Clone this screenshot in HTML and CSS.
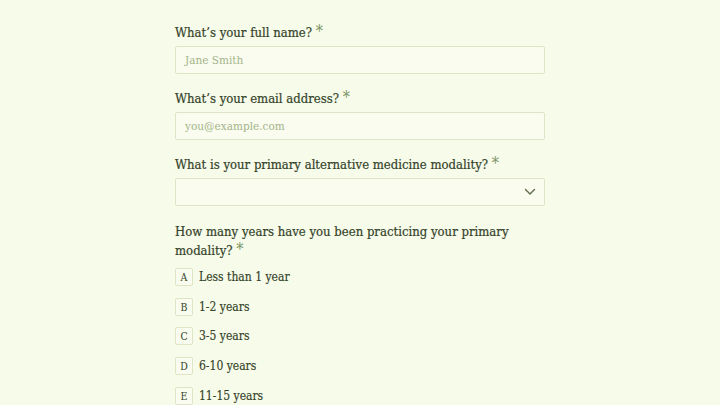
FILE: index.html
```html
<!DOCTYPE html>
<html lang="en">
<head>
<meta charset="utf-8">
<link rel="stylesheet" href="styles.css">
</head>
<body>
<form class="form">
  <div class="field">
    <label class="label">What’s your full name? <span class="req">*</span></label>
    <div class="input placeholder">Jane Smith</div>
  </div>
  <div class="field">
    <label class="label">What’s your email address? <span class="req">*</span></label>
    <div class="input placeholder">you@example.com</div>
  </div>
  <div class="field">
    <label class="label">What is your primary alternative medicine modality? <span class="req">*</span></label>
    <div class="input select">
      <svg class="chev" width="12" height="8" viewBox="0 0 12 8"><path d="M1.5 1.5 L6 6 L10.5 1.5" fill="none" stroke="#5d6b4c" stroke-width="1.4" stroke-linecap="round" stroke-linejoin="round"/></svg>
    </div>
  </div>
  <div class="field">
    <label class="label">How many years have you been practicing your primary modality? <span class="req">*</span></label>
    <div class="options">
      <div class="option"><span class="key">A</span><span class="opt-text">Less than 1 year</span></div>
      <div class="option"><span class="key">B</span><span class="opt-text">1-2 years</span></div>
      <div class="option"><span class="key">C</span><span class="opt-text">3-5 years</span></div>
      <div class="option"><span class="key">D</span><span class="opt-text">6-10 years</span></div>
      <div class="option"><span class="key">E</span><span class="opt-text">11-15 years</span></div>
    </div>
  </div>
</form>
</body>
</html>
```
FILE: styles.css
```css
html, body {
  margin: 0;
  padding: 0;
  background: #f7fbe9;
}
body {
  font-family: "DejaVu Serif Condensed", "DejaVu Serif", "Liberation Serif", serif;
  color: #3b4a2c;
  overflow: hidden;
}
.form {
  width: 370px;
  margin: 0 auto;
  padding-top: 23px;
  display: flex;
  flex-direction: column;
  gap: 15.6px;
}
.field {
  display: flex;
  flex-direction: column;
  gap: 3px;
}
.label {
  font-size: 13px;
  line-height: 19.5px;
  color: #34432a;
  -webkit-text-stroke: 0.2px #34432a;
}
.field:last-child .label {
  padding-top: 1px;
  line-height: 19px;
}
.req {
  color: #7a9364;
  -webkit-text-stroke: 0;
  font-size: 16px;
  vertical-align: top;
  line-height: 17px;
}
.input {
  box-sizing: border-box;
  height: 28px;
  border: 1px solid #dde5c6;
  border-radius: 2px;
  background: #f9fcee;
  display: flex;
  align-items: center;
  padding: 0 9px;
}
.placeholder {
  font-size: 11.7px;
  color: #a5b48c;
}
.select {
  justify-content: flex-end;
  padding-right: 8px;
}
.options {
  margin-top: 5px;
  display: flex;
  flex-direction: column;
  gap: 11.6px;
}
.option {
  display: flex;
  align-items: center;
  gap: 6px;
  height: 18px;
}
.key {
  box-sizing: border-box;
  width: 18px;
  height: 18px;
  border: 1px solid #dde5c6;
  border-radius: 2px;
  background: #f9fcee;
  font-size: 10.5px;
  display: flex;
  align-items: center;
  justify-content: center;
  color: #34432a;
}
.opt-text {
  font-size: 12px;
  color: #34432a;
  -webkit-text-stroke: 0.15px #34432a;
}
```
